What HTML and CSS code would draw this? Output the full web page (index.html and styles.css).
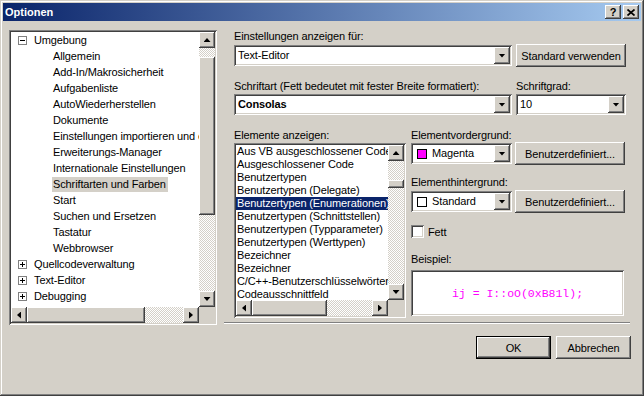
FILE: index.html
```html
<!DOCTYPE html>
<html lang="de">
<head>
    <meta charset="UTF-8">
    <title>Optionen</title>
    <link rel="stylesheet" href="styles.css">
</head>
<body>

<div class="window">
    <div class="titlebar">
        <span class="title">Optionen</span>
        <div class="caption-btns">
            <span class="cap-btn">?</span>
            <span class="cap-btn">
                <svg width="8" height="7" viewBox="0 0 8 7"><path d="M0.5 0.5 L7.5 6.5 M7.5 0.5 L0.5 6.5" stroke="#000" stroke-width="1.7" fill="none"/></svg>
            </span>
        </div>
    </div>

    <div class="main">
        <!-- tree on the left -->
        <div class="tree sunken">
            <div class="tree-items">
                <div class="node top">
                    <svg class="expander" width="9" height="9"><rect x="0.5" y="0.5" width="8" height="8" fill="#fff" stroke="#808080"/><path d="M2 4.5h5" stroke="#000"/></svg>
                    <span>Umgebung</span>
                </div>
                <div class="node child"><span>Allgemein</span></div>
                <div class="node child"><span>Add-In/Makrosicherheit</span></div>
                <div class="node child"><span>Aufgabenliste</span></div>
                <div class="node child"><span>AutoWiederherstellen</span></div>
                <div class="node child"><span>Dokumente</span></div>
                <div class="node child"><span>Einstellungen importieren und exportieren</span></div>
                <div class="node child"><span>Erweiterungs-Manager</span></div>
                <div class="node child"><span>Internationale Einstellungen</span></div>
                <div class="node child selected"><span>Schriftarten und Farben</span></div>
                <div class="node child"><span>Start</span></div>
                <div class="node child"><span>Suchen und Ersetzen</span></div>
                <div class="node child"><span>Tastatur</span></div>
                <div class="node child"><span>Webbrowser</span></div>
                <div class="node top">
                    <svg class="expander" width="9" height="9"><rect x="0.5" y="0.5" width="8" height="8" fill="#fff" stroke="#808080"/><path d="M2 4.5h5M4.5 2v5" stroke="#000"/></svg>
                    <span>Quellcodeverwaltung</span>
                </div>
                <div class="node top">
                    <svg class="expander" width="9" height="9"><rect x="0.5" y="0.5" width="8" height="8" fill="#fff" stroke="#808080"/><path d="M2 4.5h5M4.5 2v5" stroke="#000"/></svg>
                    <span>Text-Editor</span>
                </div>
                <div class="node top">
                    <svg class="expander" width="9" height="9"><rect x="0.5" y="0.5" width="8" height="8" fill="#fff" stroke="#808080"/><path d="M2 4.5h5M4.5 2v5" stroke="#000"/></svg>
                    <span>Debugging</span>
                </div>
                <div class="node top">
                    <svg class="expander" width="9" height="9"><rect x="0.5" y="0.5" width="8" height="8" fill="#fff" stroke="#808080"/><path d="M2 4.5h5M4.5 2v5" stroke="#000"/></svg>
                    <span>Projekte und Projektmappen</span>
                </div>
            </div>
            <div class="vscroll">
                <span class="sb-btn up"></span>
                <span class="thumb tree-vthumb"></span>
                <span class="sb-fill"></span>
                <span class="sb-btn down"></span>
            </div>
            <div class="hscroll">
                <span class="sb-btn left"></span>
                <span class="thumb tree-hthumb"></span>
                <span class="sb-fill"></span>
                <span class="sb-btn right"></span>
            </div>
            <div class="corner"></div>
        </div>

        <!-- settings page -->
        <div class="page">
            <div class="page-body">
                <div class="label">Einstellungen anzeigen für:</div>
                <div class="row tall">
                    <div class="combo sunken">
                        <span class="combo-text">Text-Editor</span>
                        <span class="drop-btn"></span>
                    </div>
                    <button class="btn">Standard verwenden</button>
                </div>

                <div class="row labels">
                    <div class="label">Schriftart (Fett bedeutet mit fester Breite formatiert):</div>
                    <div class="label">Schriftgrad:</div>
                </div>
                <div class="row">
                    <div class="combo sunken">
                        <span class="combo-text bold">Consolas</span>
                        <span class="drop-btn"></span>
                    </div>
                    <div class="combo sunken">
                        <span class="combo-text">10</span>
                        <span class="drop-btn"></span>
                    </div>
                </div>

                <div class="split">
                    <div class="col">
                        <div class="label">Elemente anzeigen:</div>
                        <div class="list sunken">
                            <div class="list-items">
                                <div class="item">Aus VB ausgeschlossener Code</div>
                                <div class="item">Ausgeschlossener Code</div>
                                <div class="item">Benutzertypen</div>
                                <div class="item">Benutzertypen (Delegate)</div>
                                <div class="item selected">Benutzertypen (Enumerationen)</div>
                                <div class="item">Benutzertypen (Schnittstellen)</div>
                                <div class="item">Benutzertypen (Typparameter)</div>
                                <div class="item">Benutzertypen (Werttypen)</div>
                                <div class="item">Bezeichner</div>
                                <div class="item">Bezeichner</div>
                                <div class="item">C/C++-Benutzerschlüsselwörter</div>
                                <div class="item">Codeausschnittfeld</div>
                                <div class="item">Codeausschnittsabhängigkeitsfeld</div>
                            </div>
                            <div class="vscroll">
                                <span class="sb-btn up"></span>
                                <span class="thumb list-vthumb"></span>
                                <span class="sb-fill"></span>
                                <span class="sb-btn down"></span>
                            </div>
                            <div class="hscroll">
                                <span class="sb-btn left"></span>
                                <span class="thumb list-hthumb"></span>
                                <span class="sb-fill"></span>
                                <span class="sb-btn right"></span>
                            </div>
                            <div class="corner"></div>
                        </div>
                    </div>

                    <div class="col">
                        <div class="label">Elementvordergrund:</div>
                        <div class="color-row">
                            <div class="combo sunken color-combo">
                                <span class="swatch magenta"></span>
                                <span class="combo-text">Magenta</span>
                                <span class="drop-btn"></span>
                            </div>
                            <button class="btn">Benutzerdefiniert...</button>
                        </div>
                        <div class="label second">Elementhintergrund:</div>
                        <div class="color-row">
                            <div class="combo sunken color-combo">
                                <span class="swatch"></span>
                                <span class="combo-text">Standard</span>
                                <span class="drop-btn"></span>
                            </div>
                            <button class="btn">Benutzerdefiniert...</button>
                        </div>
                        <label class="check">
                            <span class="check-box sunken"></span>
                            <span>Fett</span>
                        </label>
                        <div class="label sample-label">Beispiel:</div>
                        <div class="sample sunken">ij = I::oO(0xB81l);</div>
                    </div>
                </div>
            </div>
            <div class="separator"></div>
        </div>
    </div>

    <div class="footer">
        <button class="btn default">OK</button>
        <button class="btn">Abbrechen</button>
    </div>
</div>

</body>
</html>
```

FILE: styles.css
```css
body {
    margin: 0;
    font-family: "Liberation Sans", Arial, sans-serif;
    font-size: 11px;
    letter-spacing: -0.12px;
    color: #000;
    background: #d4d0c8;
}
.window {
    width: 644px;
    height: 396px;
    box-sizing: border-box;
    padding: 3px;
    background: #d4d0c8;
    box-shadow: inset -1px -1px #404040, inset 1px 1px #d4d0c8, inset -2px -2px #808080, inset 2px 2px #fff;
}
.titlebar {
    height: 18px;
    display: flex;
    align-items: center;
    justify-content: space-between;
    padding: 0 2px 0 2px;
    background: linear-gradient(90deg, #0a246a, #a6caf0);
}
.title {
    color: #fff;
    font-weight: bold;
    letter-spacing: 0;
}
.caption-btns {
    display: flex;
    gap: 2px;
}
.cap-btn {
    width: 16px;
    height: 14px;
    display: flex;
    align-items: center;
    justify-content: center;
    font-weight: bold;
    line-height: 14px;
    background: #d4d0c8;
    box-shadow: inset -1px -1px #404040, inset 1px 1px #fff, inset -2px -2px #808080;
}

/* shared 3d looks */
.sunken {
    box-shadow: inset 1px 1px #808080, inset -1px -1px #fff, inset 2px 2px #404040, inset -2px -2px #d4d0c8;
}
.btn, .sb-btn, .thumb, .drop-btn {
    background: #d4d0c8;
    box-shadow: inset -1px -1px #404040, inset 1px 1px #fff, inset -2px -2px #808080, inset 2px 2px #d4d0c8;
}
.btn {
    font: inherit;
    letter-spacing: inherit;
    color: #000;
    height: 23px;
    border: none;
    padding: 0;
    margin: 0;
}
.btn.default {
    box-shadow: inset 0 0 0 1px #000, inset -2px -2px #404040, inset 2px 2px #fff, inset -3px -3px #808080;
}

.main {
    display: grid;
    grid-template-columns: 208px 406px;
    column-gap: 7px;
    padding: 9px 0 0 6px;
}

/* tree view */
.tree {
    height: 295px;
    box-sizing: border-box;
    padding: 2px;
    background: #fff;
    display: grid;
    grid-template-columns: 1fr 16px;
    grid-template-rows: 1fr 16px;
    overflow: hidden;
}
.tree-items {
    overflow: hidden;
    min-width: 0;
    min-height: 0;
}
.node {
    height: 16px;
    display: flex;
    align-items: center;
    white-space: nowrap;
    line-height: 16px;
}
.node.top {
    padding-left: 7px;
}
.node.top .expander {
    margin-right: 7px;
    flex: none;
}
.node.child {
    padding-left: 41px;
}
.node.child span {
    line-height: 15px;
    padding: 0 2px 0 1px;
}
.node.selected span {
    background: #d4d0c8;
}

/* scrollbars */
.vscroll, .hscroll {
    display: flex;
    background-color: #fff;
    background-image: repeating-conic-gradient(#d4d0c8 0 25%, #fff 0 50%);
    background-size: 2px 2px;
}
.vscroll {
    flex-direction: column;
    grid-row: 1;
    grid-column: 2;
}
.hscroll {
    grid-row: 2;
    grid-column: 1;
}
.corner {
    background: #d4d0c8;
}
.sb-btn {
    width: 16px;
    height: 16px;
    flex: none;
    display: flex;
    align-items: center;
    justify-content: center;
}
.sb-btn::before, .drop-btn::before {
    content: "";
    width: 7px;
    height: 4px;
    background: #000;
}
.sb-btn.up::before {
    clip-path: polygon(50% 0, 100% 100%, 0 100%);
}
.sb-btn.down::before, .drop-btn::before {
    clip-path: polygon(0 0, 100% 0, 50% 100%);
}
.sb-btn.left::before {
    width: 4px;
    height: 7px;
    clip-path: polygon(100% 0, 100% 100%, 0 50%);
}
.sb-btn.right::before {
    width: 4px;
    height: 7px;
    clip-path: polygon(0 0, 100% 50%, 0 100%);
}
.sb-fill {
    flex: 1;
}
.thumb {
    flex: none;
}
.tree-vthumb {
    margin-top: 9px;
    height: 158px;
}
.tree-hthumb {
    width: 118px;
}
.list-vthumb {
    margin-top: 19px;
    height: 8px;
}
.list-hthumb {
    width: 75px;
}

/* page on the right */
.page {
    display: flex;
    flex-direction: column;
}
.page-body {
    padding-left: 10px;
}
.label {
    line-height: 13px;
    height: 13px;
    white-space: nowrap;
}
.row {
    display: grid;
    grid-template-columns: 278px 110px;
    column-gap: 4px;
    align-items: center;
    height: 21px;
}
.row.tall {
    height: 23px;
    margin-top: 1px;
}
.row.labels {
    height: 13px;
    margin-top: 13px;
    margin-bottom: 1px;
}
.combo {
    height: 21px;
    box-sizing: border-box;
    padding: 2px;
    background: #fff;
    display: flex;
    align-items: center;
}
.combo-text {
    flex: 1;
    padding-left: 2px;
    line-height: 17px;
    white-space: nowrap;
    overflow: hidden;
}
.combo-text.bold {
    font-weight: bold;
}
.drop-btn {
    width: 16px;
    height: 17px;
    flex: none;
    display: flex;
    align-items: center;
    justify-content: center;
}

.split {
    display: grid;
    grid-template-columns: 172px 214px;
    column-gap: 5px;
    margin-top: 14px;
}
.col {
    display: flex;
    flex-direction: column;
}
.list {
    margin-top: 1px;
    height: 175px;
    box-sizing: border-box;
    padding: 2px;
    background: #fff;
    display: grid;
    grid-template-columns: 1fr 16px;
    grid-template-rows: 1fr 16px;
    overflow: hidden;
}
.list-items {
    overflow: hidden;
    min-width: 0;
    min-height: 0;
}
.item {
    height: 13px;
    line-height: 13px;
    padding-left: 1px;
    white-space: nowrap;
}
.item.selected {
    background: #0a246a;
    color: #fff;
}

.color-row {
    display: flex;
    gap: 3px;
    align-items: center;
    height: 23px;
}
.color-row .btn {
    width: 110px;
}
.color-combo {
    width: 101px;
    padding-left: 6px;
}
.color-combo .combo-text {
    padding-left: 5px;
}
.swatch {
    width: 10px;
    height: 10px;
    box-sizing: border-box;
    border: 1px solid #000;
    background: #fff;
    flex: none;
}
.swatch.magenta {
    background: #ff00ff;
}
.label.second {
    margin-top: 11px;
    margin-bottom: 1px;
}
.check {
    display: flex;
    align-items: center;
    gap: 4px;
    height: 13px;
    margin-top: 12px;
}
.check-box {
    width: 13px;
    height: 13px;
    background: #fff;
}
.sample-label {
    margin-top: 15px;
}
.sample {
    margin-top: 4px;
    width: 213px;
    height: 46px;
    box-sizing: border-box;
    background: #fff;
    display: flex;
    align-items: center;
    justify-content: center;
    font-family: "Liberation Mono", "DejaVu Sans Mono", monospace;
    font-size: 11.5px;
    letter-spacing: 0;
    color: #ff00ff;
}
.separator {
    margin-top: 4px;
    height: 1px;
    border-top: 1px solid #808080;
    background: #fff;
}

.footer {
    display: flex;
    justify-content: flex-end;
    gap: 5px;
    padding: 11px 10px 0 0;
}
.footer .btn {
    width: 75px;
}
```
